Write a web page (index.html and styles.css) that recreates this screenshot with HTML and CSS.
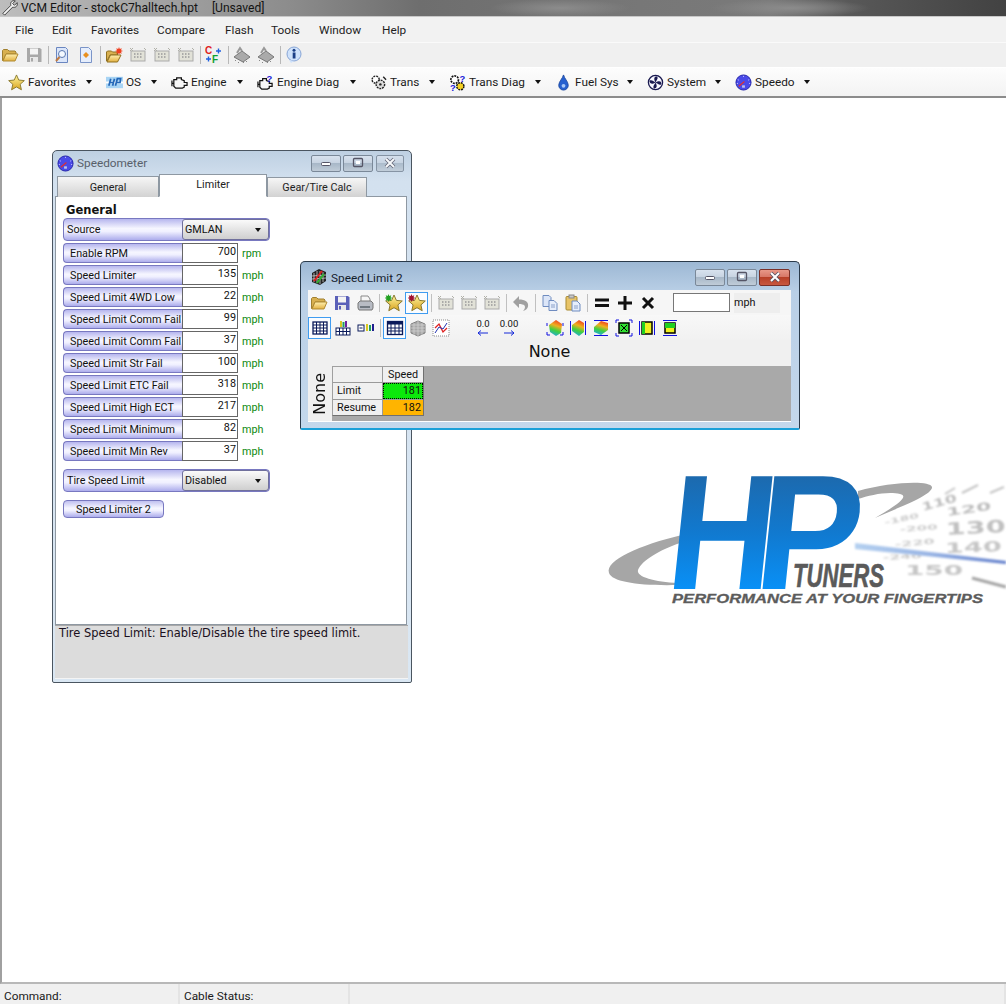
FILE: index.html
```html
<!DOCTYPE html>
<html lang="en">
<head>
<meta charset="utf-8">
<title>VCM Editor</title>
<link rel="stylesheet" href="styles.css">
</head>
<body>
<svg class="defs" width="0" height="0" aria-hidden="true">
  <defs>
    <linearGradient id="gFolder" x1="0" y1="0" x2="0" y2="1"><stop offset="0" stop-color="#fff0b0"/><stop offset="1" stop-color="#e2b040"/></linearGradient>
    <linearGradient id="gStar" x1="0" y1="0" x2="0" y2="1"><stop offset="0" stop-color="#fff6a0"/><stop offset="1" stop-color="#d9a420"/></linearGradient>
    <linearGradient id="gHeat" x1=".65" y1="0" x2=".35" y2="1"><stop offset="0" stop-color="#f04020"/><stop offset=".35" stop-color="#f0b020"/><stop offset=".65" stop-color="#40d040"/><stop offset="1" stop-color="#20a8e0"/></linearGradient>
    <linearGradient id="gHP" x1="0" y1="0" x2="0" y2="1"><stop offset=".12" stop-color="#1f66a6"/><stop offset=".5" stop-color="#1179cf"/><stop offset=".85" stop-color="#0893fb"/></linearGradient>
    <linearGradient id="gNeedle" x1="0" y1="0" x2="1" y2="0"><stop offset="0" stop-color="#b4d0f0"/><stop offset=".5" stop-color="#98b4e4"/><stop offset="1" stop-color="#5f7cca"/></linearGradient>
    <symbol id="i-folder" viewBox="0 0 18 18"><path d="M1.500 14.500V4.500l1-1h4l1.500 1.500h6l1 1v2H5L2 14.500z" fill="#d8b050" stroke="#a08030"/><path d="M2 15l3-7h12l-3 7z" fill="url(#gFolder)" stroke="#b08a30"/></symbol>
    <symbol id="i-newfolder" viewBox="0 0 18 18"><path d="M1.500 15V6l1-1h4l1 1h5v3H5l-3 6z" fill="#d8b050" stroke="#907020"/><path d="M2 16l3.500-7H16l-3.500 7z" fill="url(#gFolder)" stroke="#907020"/><path d="M14 1l.8 2 2-.8-.8 2 2 .8-2 .8.800 2-2-.8-.8 2-.8-2-2 .8.800-2-2-.8 2-.8-.8-2 2 .8z" fill="#f04020"/></symbol>
    <symbol id="i-save" viewBox="0 0 18 18"><path d="M2 2h13l1.500 1.500V16H2z" fill="currentColor"/><rect x="5" y="2.500" width="8" height="6" fill="#f4f4f4"/><rect x="5" y="11" width="8" height="5" fill="#e8e8e8"/><rect x="6" y="12" width="2" height="3.500" fill="currentColor"/></symbol>
    <symbol id="i-print" viewBox="0 0 18 18"><path d="M5 2h7l2 3v4H5z" fill="#f6f6f6" stroke="#888"/><path d="M2 9l2-2h11l2 2v5l-1 2H3l-1-2z" fill="#b8bcc4" stroke="#777"/><rect x="4" y="12" width="10" height="2" fill="#707880"/></symbol>
    <symbol id="i-docsearch" viewBox="0 0 18 18"><path d="M3.500 1.500h9l2 2v13h-11z" fill="#dbe6fa" stroke="#6a86c0"/><circle cx="9" cy="8" r="3.500" fill="#f4f9ff" stroke="#5a78b0"/><path d="M6.500 11L3 15" stroke="#c07a40" stroke-width="2"/></symbol>
    <symbol id="i-docorange" viewBox="0 0 18 18"><path d="M3.500 1.500h8l3 3v12h-11z" fill="#e6eefc" stroke="#7a94c8"/><path d="M9 6l3 3-3 3-3-3z" fill="#e89020"/></symbol>
    <symbol id="i-grid" viewBox="0 0 18 18"><rect x="2" y="5" width="14" height="10" fill="#e2e2d8" stroke="#aaa"/><path d="M5 8h1.500M8 8h1.500M11 8h1.500M5 11h1.500M8 11h1.500M11 11h1.500" stroke="#999" stroke-width="1.500"/><path d="M1 2l3 3M4 2L1 5M15 2l2 2" stroke="#b0b0a8"/></symbol>
    <symbol id="i-cf" viewBox="0 0 18 18"><text x="0" y="8" class="ic-c">C</text><text x="7" y="16.500" class="ic-f">F</text><path d="M1 13h5M3.500 10.500v5" stroke="#2060e0" stroke-width="1.400"/><path d="M11 5h5M13.500 2.500v5" stroke="#2060e0" stroke-width="1.400"/></symbol>
    <symbol id="i-chip" viewBox="0 0 18 18"><path d="M1 11l8-6 8 6-7 5z" fill="#aaa" stroke="#777"/><path d="M3 14l-1 1M6 16l-1 1M10 16l1 1M13 15l1 1" stroke="#888"/><path d="M4 7l3-5 2 3" fill="none" stroke="#999" stroke-width="2"/></symbol>
    <symbol id="i-info" viewBox="0 0 18 18"><circle cx="9" cy="8" r="7" fill="#cfe2fb" stroke="#87a5d6"/><path d="M4 14l2 3 3-2z" fill="#cfe2fb"/><rect x="7.700" y="6.500" width="2.800" height="6" fill="#1c3f86"/><circle cx="9" cy="4.200" r="1.500" fill="#1c3f86"/></symbol>
    <symbol id="i-star" viewBox="0 0 18 18"><path d="M9 1l2.400 5.400 5.900.6-4.400 3.900 1.300 5.800L9 13.700l-5.200 3 1.300-5.800L.7 7l5.900-.6z" fill="url(#gStar)" stroke="#8a7a30"/></symbol>
    <symbol id="i-star-g" viewBox="0 0 18 18"><use href="#i-star"/><path d="M3.500 0l.8 2 2-.8-.8 2 2 .8-2 .8.800 2-2-.8-.8 2-.8-2-2 .8.800-2-2-.8 2-.8-.8-2 2 .8z" fill="#20a020"/></symbol>
    <symbol id="i-star-r" viewBox="0 0 18 18"><use href="#i-star"/><path d="M3.500 0l.8 2 2-.8-.8 2 2 .8-2 .8.800 2-2-.8-.8 2-.8-2-2 .8.800-2-2-.8 2-.8-.8-2 2 .8z" fill="#a01030"/></symbol>
    <symbol id="i-hp" viewBox="0 0 18 18"><rect x="0" y="3" width="18" height="12" fill="#a8d4f4"/><rect x="0" y="8" width="18" height="2" fill="#fff"/><path d="M3 12.500L5 5M9 5L7 12.500M4 9h4M10 12.500L12 5h3.500l-.6 4H11" fill="none" stroke="#2468b8" stroke-width="1.800"/></symbol>
    <symbol id="i-engine" viewBox="0 0 18 18"><path d="M1 7v6M1 10h2M3 6h3V4h5v2l3 1v2h3v3h-3v2l-2 1H5l-2-2z" fill="none" stroke="#111" stroke-width="1.300"/></symbol>
    <symbol id="i-enginediag" viewBox="0 0 18 18"><path d="M1 8v6M1 11h2M3 7h3V5h4v2l3 1v2h3v3h-3v2l-2 1H5l-2-2z" fill="none" stroke="#111" stroke-width="1.300"/><text x="10" y="8" class="ic-q">?</text></symbol>
    <symbol id="i-trans" viewBox="0 0 18 18"><circle cx="6" cy="6" r="3.800" fill="#fff" stroke="#222" stroke-width="1.500" stroke-dasharray="2 1"/><circle cx="11" cy="11" r="4.500" fill="#ddd" stroke="#222" stroke-width="1.500" stroke-dasharray="2 1"/><circle cx="11" cy="11" r="1.300" fill="#222"/><path d="M14 3l3 3" stroke="#222" stroke-width="1.500"/></symbol>
    <symbol id="i-transdiag" viewBox="0 0 18 18"><circle cx="6" cy="6" r="4" fill="#fff" stroke="#111" stroke-width="1.800" stroke-dasharray="2 1"/><circle cx="12" cy="13" r="3.800" fill="#f4d020" stroke="#111" stroke-width="1.500" stroke-dasharray="2 1"/><text x="11" y="8.500" class="ic-q">?</text><text x="1" y="17.500" class="ic-q">?</text></symbol>
    <symbol id="i-fuel" viewBox="0 0 18 18"><path d="M9 1c1 4 5 7 5 11a5 5 0 0 1-10 0c0-4 4-7 5-11z" fill="#2560d0" stroke="#1c48a0"/><circle cx="9" cy="12.500" r="2" fill="#a8c8f8"/></symbol>
    <symbol id="i-system" viewBox="0 0 18 18"><circle cx="9" cy="9" r="7.500" fill="#f8f8ff" stroke="#1a1a50" stroke-width="1.400"/><path d="M9 9C6 4 9 2 11 3c1 2-1 4-2 6zM9 9c5-3 7 0 6 2-2 1-4-1-6-2zM9 9c3 5 0 7-2 6-1-2 1-4 2-6zM9 9C4 12 2 9 3 7c2-1 4 1 6 2z" fill="#1a1a50"/></symbol>
    <symbol id="i-speedo" viewBox="0 0 18 18"><circle cx="9" cy="9" r="8" fill="#4a4ae8" stroke="#2222a8"/><path d="M4 13l6-5" stroke="#e03030" stroke-width="1.300"/><rect x="7.500" y="12" width="3" height="2.500" fill="#c0c0e8"/><path d="M9 2v1M3 6l1 .5M15 6l-1 .5M2 10h1M15 10h1" stroke="#d8d8ff"/></symbol>
    <symbol id="i-table" viewBox="0 0 18 18"><rect x="2" y="3" width="14" height="12" fill="#fff" stroke="#0a1a5a" stroke-width="1.300"/><path d="M2 6h14M2 9h14M2 12h14M5.500 3v12M9 3v12M12.500 3v12" stroke="#0a1a5a"/></symbol>
    <symbol id="i-tablebars" viewBox="0 0 18 18"><rect x="2" y="9" width="14" height="7" fill="#fff" stroke="#0a1a5a"/><path d="M2 12.500h14M5.500 9v7M9 9v7M12.500 9v7" stroke="#0a1a5a"/><rect x="6" y="2" width="2" height="6" fill="#d8c820"/><rect x="8.500" y="3" width="2" height="5" fill="#20a060"/><rect x="11" y="2" width="2" height="6" fill="#7020a0"/></symbol>
    <symbol id="i-splitbars" viewBox="0 0 18 18"><rect x="1" y="6" width="6" height="6" fill="#fff" stroke="#0a1a5a"/><path d="M2.500 9h3" stroke="#0a1a5a"/><rect x="9" y="5" width="2" height="7" fill="#d8c820"/><rect x="12" y="6" width="2" height="6" fill="#20a060"/><rect x="15" y="5" width="2" height="7" fill="#202090"/></symbol>
    <symbol id="i-tablesel" viewBox="0 0 18 18"><rect x="1.500" y="2.500" width="15" height="13" fill="#fff" stroke="#0a1a5a" stroke-width="1.300"/><rect x="1.500" y="2.500" width="15" height="3" fill="#0a1a5a"/><path d="M1.500 9h15M1.500 12h15M5 5v10M9 5v10M13 5v10" stroke="#0a1a5a"/></symbol>
    <symbol id="i-mesh" viewBox="0 0 18 18"><path d="M2 5l7-3 7 3v9l-7 3-7-3z" fill="#a8a8a8" stroke="#808080"/><path d="M2 9l14 0M5 4v12M9 2v15M13 4v12M2 12l14 0M2 6l14 0" stroke="#d0d0d0" stroke-width=".8"/></symbol>
    <symbol id="i-graph" viewBox="0 0 18 18"><rect x="1" y="1" width="16" height="16" fill="#fff" stroke="#888" stroke-dasharray="1 1"/><path d="M3 9l4-4 4 8 4-4" fill="none" stroke="#e02020" stroke-width="1.300"/><path d="M3 14l4-6 4 2 4-6" fill="none" stroke="#2030b0"/></symbol>
    <symbol id="i-heat" viewBox="0 0 18 18"><path d="M3 6l7-5 6 4-1 9-5 3-6-4z" fill="url(#gHeat)"/><path d="M1 4v3M1 13v3h3M17 4v3M17 13v3h-3" fill="none" stroke="#1010e0"/></symbol>
    <symbol id="i-heatv" viewBox="0 0 18 18"><path d="M3 6l7-5 5 3v9l-5 4-7-5z" fill="url(#gHeat)"/><path d="M1.500 2v14M16.500 2v14" stroke="#1010e0"/></symbol>
    <symbol id="i-heath" viewBox="0 0 18 18"><path d="M2 8l7-6 7 2v7l-7 5-7-3z" fill="url(#gHeat)"/><path d="M2 1.500h14M2 16.500h14" stroke="#1010e0"/></symbol>
    <symbol id="i-boxx" viewBox="0 0 18 18"><rect x="4" y="4" width="10" height="10" fill="#30e030" stroke="#000" stroke-width="1.500"/><path d="M6 6l6 6M12 6l-6 6" stroke="#000"/><path d="M1 4V1h3M14 1h3v3M1 14v3h3M17 14v3h-3" fill="none" stroke="#1010e0"/></symbol>
    <symbol id="i-boxv" viewBox="0 0 18 18"><rect x="4" y="3" width="10" height="12" fill="#f0f020" stroke="#000" stroke-width="1.500"/><rect x="4" y="3" width="3" height="12" fill="#20d020"/><path d="M1.500 2v14M16.500 2v14" stroke="#1010e0"/></symbol>
    <symbol id="i-boxh" viewBox="0 0 18 18"><rect x="4" y="4" width="10" height="10" fill="#f0f020" stroke="#000" stroke-width="1.500"/><rect x="4" y="4" width="10" height="5" fill="#20d020"/><path d="M2 1.500h14M2 16.500h14" stroke="#1010e0"/></symbol>
    <symbol id="i-undo" viewBox="0 0 18 18"><path d="M1 8l6-6v3.500c6 0 10 2.500 9 7-.5 2-2 3.500-5 4.500 2-2 2.500-4 1.500-5.500-1-1-3-1.500-5.500-1.500v4z" fill="#a0a0a0"/></symbol>
    <symbol id="i-copy" viewBox="0 0 18 18"><path d="M2 1.500h6l2 2v9H2z" fill="#dce6f8" stroke="#6f8cc0"/><path d="M8 6.500h5l3 3v7H8z" fill="#e6eefc" stroke="#6f8cc0"/><path d="M10 11h4M10 13h4" stroke="#8aa0c8"/></symbol>
    <symbol id="i-paste" viewBox="0 0 18 18"><rect x="2" y="2.500" width="11" height="13.500" rx="1" fill="#e8c468" stroke="#a88a30"/><rect x="5" y="1" width="5" height="3" fill="#c8c8c8" stroke="#888"/><path d="M8 7h5l3 3v7H8z" fill="#e6eefc" stroke="#6f8cc0"/><path d="M10 12h4M10 14h4" stroke="#8aa0c8"/></symbol>
    <symbol id="i-eq" viewBox="0 0 18 18"><path d="M2 6h14M2 11.500h14" stroke="#111" stroke-width="3"/></symbol>
    <symbol id="i-plus" viewBox="0 0 18 18"><path d="M2 9h14M9 2v14" stroke="#111" stroke-width="3"/></symbol>
    <symbol id="i-times" viewBox="0 0 18 18"><path d="M4 4l10 10M14 4L4 14" stroke="#111" stroke-width="3"/></symbol>
    <symbol id="i-gauge" viewBox="0 0 18 18"><path d="M2 5l7-4 7 3v9l-6 4-8-3z" fill="#222"/><path d="M4 5v9M7 3v12M10 3v13M13 4v10M2 8l14-1M2 11l14-1" stroke="#cfcfcf" stroke-width=".8"/><path d="M4 13l8-10" stroke="#e02020" stroke-width="2"/><path d="M7 15l7-9" stroke="#30b030" stroke-width="2"/></symbol>
    <symbol id="i-wrench" viewBox="0 0 18 18"><path d="M1 15l9-9c-1-3 1-6 5-5l-3 3 2 2 3-3c1 4-2 6-5 5l-9 9z" fill="#f4f4f4" stroke="#333"/></symbol>
    <symbol id="i-min" viewBox="0 0 12 12"><rect x="1.500" y="5.500" width="9" height="3" rx="1" fill="#fff" stroke="#556"/></symbol>
    <symbol id="i-max" viewBox="0 0 12 12"><rect x="1.500" y="1.500" width="9" height="8" rx="1" fill="none" stroke="#556" stroke-width="1.300"/><rect x="4" y="4" width="4" height="3" fill="#fff"/></symbol>
    <symbol id="i-close" viewBox="0 0 12 12"><path d="M2 2l8 8M10 2l-8 8" stroke="#556" stroke-width="3.600"/><path d="M2 2l8 8M10 2l-8 8" stroke="#fff" stroke-width="2"/></symbol>
  </defs>
</svg>

<div class="app">
  <header class="titlebar">
    <svg class="ico"><use href="#i-wrench"/></svg>
    <span class="titlebar-text">VCM Editor - stockC7halltech.hpt</span>
    <span class="titlebar-state">[Unsaved]</span>
  </header>

  <nav class="menubar">
    <span>File</span><span>Edit</span><span>Favorites</span><span>Compare</span><span>Flash</span><span>Tools</span><span>Window</span><span>Help</span>
  </nav>

  <div class="iconbar">
    <svg class="ico"><use href="#i-folder"/></svg>
    <svg class="ico off"><use href="#i-save"/></svg>
    <i class="sep"></i>
    <svg class="ico"><use href="#i-docsearch"/></svg>
    <svg class="ico"><use href="#i-docorange"/></svg>
    <i class="sep"></i>
    <svg class="ico"><use href="#i-newfolder"/></svg>
    <svg class="ico"><use href="#i-grid"/></svg>
    <svg class="ico"><use href="#i-grid"/></svg>
    <svg class="ico"><use href="#i-grid"/></svg>
    <i class="sep"></i>
    <svg class="ico"><use href="#i-cf"/></svg>
    <i class="sep"></i>
    <svg class="ico"><use href="#i-chip"/></svg>
    <svg class="ico"><use href="#i-chip"/></svg>
    <i class="sep"></i>
    <svg class="ico"><use href="#i-info"/></svg>
  </div>

  <div class="navbar">
    <div class="navitem"><svg class="ico"><use href="#i-star"/></svg><span>Favorites</span><b class="caret"></b></div>
    <div class="navitem"><svg class="ico"><use href="#i-hp"/></svg><span>OS</span><b class="caret"></b></div>
    <div class="navitem"><svg class="ico"><use href="#i-engine"/></svg><span>Engine</span><b class="caret"></b></div>
    <div class="navitem"><svg class="ico"><use href="#i-enginediag"/></svg><span>Engine Diag</span><b class="caret"></b></div>
    <div class="navitem"><svg class="ico"><use href="#i-trans"/></svg><span>Trans</span><b class="caret"></b></div>
    <div class="navitem"><svg class="ico"><use href="#i-transdiag"/></svg><span>Trans Diag</span><b class="caret"></b></div>
    <div class="navitem"><svg class="ico"><use href="#i-fuel"/></svg><span>Fuel Sys</span><b class="caret"></b></div>
    <div class="navitem"><svg class="ico"><use href="#i-system"/></svg><span>System</span><b class="caret"></b></div>
    <div class="navitem"><svg class="ico"><use href="#i-speedo"/></svg><span>Speedo</span><b class="caret"></b></div>
  </div>

  <main class="desktop">
    <section class="win win-speedo">
      <div class="win-title">
        <svg class="ico"><use href="#i-speedo"/></svg>
        <span class="win-name">Speedometer</span>
        <div class="win-btns">
          <span class="wbtn"><svg><use href="#i-min"/></svg></span>
          <span class="wbtn"><svg><use href="#i-max"/></svg></span>
          <span class="wbtn wbtn-x"><svg><use href="#i-close"/></svg></span>
        </div>
      </div>
      <div class="tabs">
        <span class="tab tab-general">General</span>
        <span class="tab tab-active">Limiter</span>
        <span class="tab tab-gear">Gear/Tire Calc</span>
      </div>
      <div class="pane">
        <h2 class="pane-head">General</h2>
        <div class="combo"><span class="combo-label">Source</span><span class="combo-box">GMLAN<b class="caret"></b></span></div>
        <div class="rows">
          <div class="row"><span class="row-label">Enable RPM</span><span class="row-val">700</span><span class="row-unit">rpm</span></div>
          <div class="row"><span class="row-label">Speed Limiter</span><span class="row-val">135</span><span class="row-unit">mph</span></div>
          <div class="row"><span class="row-label">Speed Limit 4WD Low</span><span class="row-val">22</span><span class="row-unit">mph</span></div>
          <div class="row"><span class="row-label">Speed Limit Comm Fail</span><span class="row-val">99</span><span class="row-unit">mph</span></div>
          <div class="row"><span class="row-label">Speed Limit Comm Fail R</span><span class="row-val">37</span><span class="row-unit">mph</span></div>
          <div class="row"><span class="row-label">Speed Limit Str Fail</span><span class="row-val">100</span><span class="row-unit">mph</span></div>
          <div class="row"><span class="row-label">Speed Limit ETC Fail</span><span class="row-val">318</span><span class="row-unit">mph</span></div>
          <div class="row"><span class="row-label">Speed Limit High ECT</span><span class="row-val">217</span><span class="row-unit">mph</span></div>
          <div class="row"><span class="row-label">Speed Limit Minimum</span><span class="row-val">82</span><span class="row-unit">mph</span></div>
          <div class="row"><span class="row-label">Speed Limit Min Rev</span><span class="row-val">37</span><span class="row-unit">mph</span></div>
        </div>
        <div class="combo combo-tire"><span class="combo-label">Tire Speed Limit</span><span class="combo-box">Disabled<b class="caret"></b></span></div>
        <div class="pane-btn">Speed Limiter 2</div>
      </div>
      <div class="helpbox">Tire Speed Limit: Enable/Disable the tire speed limit.</div>
    </section>

    <section class="win win-limit">
      <div class="win-title">
        <svg class="ico"><use href="#i-gauge"/></svg>
        <span class="win-name">Speed Limit 2</span>
        <div class="win-btns">
          <span class="wbtn"><svg><use href="#i-min"/></svg></span>
          <span class="wbtn"><svg><use href="#i-max"/></svg></span>
          <span class="wbtn wbtn-close"><svg><use href="#i-close"/></svg></span>
        </div>
      </div>
      <div class="tbar tbar-one">
        <svg class="ico"><use href="#i-folder"/></svg>
        <svg class="ico blue"><use href="#i-save"/></svg>
        <svg class="ico"><use href="#i-print"/></svg>
        <i class="sep"></i>
        <svg class="ico"><use href="#i-star-g"/></svg>
        <span class="hot"><svg class="ico"><use href="#i-star-r"/></svg></span>
        <i class="sep"></i>
        <svg class="ico"><use href="#i-grid"/></svg>
        <svg class="ico"><use href="#i-grid"/></svg>
        <svg class="ico"><use href="#i-grid"/></svg>
        <i class="sep"></i>
        <svg class="ico"><use href="#i-undo"/></svg>
        <i class="sep"></i>
        <svg class="ico"><use href="#i-copy"/></svg>
        <svg class="ico"><use href="#i-paste"/></svg>
        <i class="sep"></i>
        <svg class="ico"><use href="#i-eq"/></svg>
        <svg class="ico"><use href="#i-plus"/></svg>
        <svg class="ico"><use href="#i-times"/></svg>
        <span class="tb-input"></span>
        <span class="tb-unit">mph</span>
      </div>
      <div class="tbar tbar-two">
        <span class="hot"><svg class="ico"><use href="#i-table"/></svg></span>
        <svg class="ico"><use href="#i-tablebars"/></svg>
        <svg class="ico"><use href="#i-splitbars"/></svg>
        <i class="sep"></i>
        <span class="hot"><svg class="ico"><use href="#i-tablesel"/></svg></span>
        <svg class="ico"><use href="#i-mesh"/></svg>
        <svg class="ico"><use href="#i-graph"/></svg>
        <span class="dec dec-a"><span>0.0</span><svg class="dec-arrow" viewBox="0 0 12 6"><path d="M1 3h10M4 .5L1 3l3 2.500" fill="none" stroke="#1428d8"/></svg></span>
        <span class="dec dec-b"><span>0.00</span><svg class="dec-arrow" viewBox="0 0 12 6"><path d="M1 3h10M8 .5L11 3 8 5.500" fill="none" stroke="#1428d8"/></svg></span>
        <div class="tb-heat">
          <svg class="ico"><use href="#i-heat"/></svg>
          <svg class="ico"><use href="#i-heatv"/></svg>
          <svg class="ico"><use href="#i-heath"/></svg>
          <svg class="ico"><use href="#i-boxx"/></svg>
          <svg class="ico"><use href="#i-boxv"/></svg>
          <svg class="ico"><use href="#i-boxh"/></svg>
        </div>
      </div>
      <div class="axis-x">None</div>
      <div class="gridwrap">
        <div class="axis-y"><span>None</span></div>
        <div class="gridarea">
          <div class="cells">
            <span class="cell"></span><span class="cell cell-head">Speed</span>
            <span class="cell">Limit</span><span class="cell cell-limit">181</span>
            <span class="cell">Resume</span><span class="cell cell-resume">182</span>
          </div>
        </div>
      </div>
    </section>

    <svg class="logo" viewBox="0 0 406 150" role="img" aria-label="HP Tuners logo">
      <g class="logo-soft">
        <path d="M345 29l10-6M362 28l16-8M390 28l14-6" stroke="#c4c4c4" stroke-width="2"/>
        <text transform="translate(323 46) rotate(-16)" class="n n-m" textLength="36" lengthAdjust="spacingAndGlyphs">110</text>
        <text transform="translate(347 51) rotate(-8)" class="n n-m" textLength="45" lengthAdjust="spacingAndGlyphs">120</text>
        <text transform="translate(346 70) rotate(-3)" class="n n-l" textLength="60" lengthAdjust="spacingAndGlyphs">130</text>
        <text transform="translate(345 88) rotate(-2)" class="n n-l2" textLength="57" lengthAdjust="spacingAndGlyphs">140</text>
        <text transform="translate(305 110)" class="n n-l2" textLength="58" lengthAdjust="spacingAndGlyphs">150</text>
        <text transform="translate(285 60) rotate(-12)" class="n n-s" textLength="35" lengthAdjust="spacingAndGlyphs">-180</text>
        <text transform="translate(300 67) rotate(-4)" class="n n-s" textLength="38" lengthAdjust="spacingAndGlyphs">-200</text>
        <text transform="translate(295 82) rotate(-5)" class="n n-s" textLength="40" lengthAdjust="spacingAndGlyphs">-220</text>
        <text transform="translate(283 95) rotate(-3)" class="n n-s" textLength="39" lengthAdjust="spacingAndGlyphs">-240</text>
        <path d="M372 113l34 9" stroke="#a4a4a4" stroke-width="3"/>
      </g>
      <path class="logo-needle" d="M255 78l151 18v3L255 84z"/>
      <path d="M258 26C290 17 330 15 332 22 333 30 300 42 275 53 296 41 310 31 300 29 288 26 270 30 258 34z" fill="#a6a6a6"/>
      <path d="M82 70C40 80 5 95 9 108c3 9 31 13 69 12v-2C55 117 36 112 38 105c4-10 22-20 42-27z" fill="#a6a6a6"/>
      <text class="logo-hp" transform="translate(64 124) skewX(-6) scale(.9 1)">H</text>
      <text class="logo-hp" transform="translate(152 124) skewX(-6) scale(.96 1)">P</text>
      <text class="logo-tuners" x="193" y="122" textLength="91" lengthAdjust="spacingAndGlyphs">TUNERS</text>
      <text class="logo-tag" x="72" y="138" textLength="311" lengthAdjust="spacingAndGlyphs">PERFORMANCE AT YOUR FINGERTIPS</text>
    </svg>
  </main>

  <footer class="statusbar">
    <span class="st st-cmd">Command:</span>
    <span class="st st-cable">Cable Status:</span>
    <span class="st"></span>
  </footer>
</div>
</body>
</html>
```

FILE: styles.css
```css
* { box-sizing: border-box; }
html, body { margin: 0; padding: 0; }
body { width: 1006px; height: 1004px; overflow: hidden; background: #fff; color: #111; font-family: Roboto, "Liberation Sans", sans-serif; font-size: 10.800px; }
.defs { position: absolute; }
.ico { width: 18px; height: 18px; flex: none; display: block; overflow: visible; }
.ic-c, .ic-f { font: bold 10px "Liberation Sans", sans-serif; }
.ic-c { fill: #e02020; }
.ic-f { fill: #10a030; }
.ic-q { font: bold 10px "Liberation Sans", sans-serif; fill: #1818d8; }

.app { display: flex; flex-direction: column; height: 1004px; }

.titlebar {
  height: 17px; flex: none; display: flex; align-items: center; padding-left: 2px;
  border-bottom: 1px solid #c8c8c8;
  font: 12.100px/16px Roboto, sans-serif; color: #141414;
  background:
    radial-gradient(ellipse 70px 9px at 560px 8px, #8c8c8c, transparent),
    radial-gradient(ellipse 80px 9px at 790px 8px, #8c8c8c, transparent),
    linear-gradient(90deg, #bdbdbd 0, #a4a4a4 150px, #8c8c8c 290px, #6e6e6e 420px, #777 640px, #7a7a7a 770px, #585858 850px, #424242 1006px);
}
.titlebar .ico { width: 16px; height: 16px; }
.titlebar-text { margin-left: 3px; }
.titlebar-state { margin-left: 14px; }

.menubar {
  height: 25px; flex: none; padding-left: 15px; background: #f2f2f2;
  display: grid; grid-template-columns: 37px 39px 66px 68px 46px 48px 63px auto; justify-content: start; align-items: center;
  font: 11.800px Roboto, sans-serif; color: #1e1e1e;
}

.iconbar {
  height: 25px; flex: none; display: flex; align-items: center;
  background: #f0f0f0; border-top: 1px solid #fafafa;
}
.iconbar .ico { width: 18px; margin: 0 3px; }
.iconbar .ico:first-child { margin-left: 1px; }
.iconbar .sep { width: 1px; height: 18px; margin: 0 1.500px; background: #b8b8b8; flex: none; }
.iconbar .ico.off { color: #a8a8a8; }

.navbar {
  height: 31px; flex: none; padding: 0 0 0 8px; border-top: 1px solid #fff;
  background: linear-gradient(#fdfdfd, #f3f3f3);
  border-bottom: 2px solid #8c8c8c;
  display: grid; grid-template-columns: 98px 65px 86px 113px 79px 106px 92px 88px 89px; justify-content: start;
  font: 11.800px Roboto, sans-serif; color: #1a1a1a;
}
.navitem { display: flex; align-items: center; gap: 2px; padding-right: 14px; }
.navitem .ico { width: 17px; height: 17px; margin-right: 1px; }
.navitem span { white-space: nowrap; }
.caret { width: 0; height: 0; border: 3.500px solid transparent; border-top: 4px solid #111; border-bottom: 0; display: block; }
.navitem .caret { margin-left: auto; }

.desktop { flex: 1; position: relative; background: #fff; border-left: 2px solid #a0a0a0; border-bottom: 2px solid #b8b8b8; }

.statusbar { height: 20px; flex: none; display: grid; grid-template-columns: 180px 170px 1fr; background: #f0f0f0; font: 11.800px Roboto, sans-serif; color: #1a1a1a; }
.st { padding: 2px 0 0 4px; line-height: 20px; border-right: 2px solid #e4e4e4; }

.win { position: absolute; display: flex; flex-direction: column; border: 1px solid #4a5560; border-radius: 5px 5px 2px 2px; }
.win-title { display: flex; align-items: center; flex: none; font: 11.800px Roboto, sans-serif; }
.win-btns { margin-left: auto; display: flex; gap: 2px; }
.wbtn { display: flex; align-items: center; justify-content: center; height: 17px; width: 30px; border: 1px solid #7a8898; border-radius: 2px; background: linear-gradient(#d8e2ee 0, #c8d4e2 45%, #a8b8c8 50%, #c0ccd8 100%); }
.wbtn svg { width: 12px; height: 12px; display: block; }
.wbtn-x { opacity: .85; }
.wbtn-close { border-color: #7a3028; background: linear-gradient(#e89888 0, #d87868 45%, #b84028 50%, #c85840 100%); width: 31px; }

.win-speedo { left: 50px; top: 52px; width: 360px; height: 533px; padding: 0 3px 3px 2px; background: linear-gradient(#bed0e2, #d3e1ef 30px, #dae7f3); }
.win-speedo .win-title { height: 24px; padding: 0 4px 0 2px; color: #58606a; }
.win-speedo .win-title .ico { width: 17px; height: 17px; }
.win-speedo .win-name { margin-left: 3px; }
.win-speedo .wbtn:nth-child(3) { width: 28px; margin-left: 1px; }

.tabs { display: flex; height: 22px; flex: none; align-items: flex-end; padding-left: 2px; margin-bottom: -1px; position: relative; z-index: 1; }
.tab { height: 21px; border: 1px solid #8e98a2; border-bottom: 0; background: linear-gradient(#f6f6f6, #d2d2d2); display: flex; align-items: center; justify-content: center; color: #222; }
.tab-general { width: 102px; }
.tab-gear { width: 100px; height: 20px; }
.tab-active { width: 108px; height: 23px; background: #fff; border-bottom: 1px solid #fff; padding-bottom: 3px; }

.pane { height: 429px; flex: none; background: #fff; border: 1px solid #8e98a2; padding: 7px 0 0 7px; margin-right: 1px; }
.pane-head { margin: 0 0 1px 3px; font: bold 11.500px/13px "DejaVu Sans", sans-serif; color: #111; }
.combo { display: flex; width: 207px; height: 23px; border: 1px solid #7878c0; border-radius: 4px; background: linear-gradient(#b6b6ee, #f6f6ff 45%, #f0f0ff 60%, #acacec); align-items: stretch; }
.combo-label { width: 118px; padding-left: 3px; line-height: 21px; }
.combo-box { flex: 1; display: flex; align-items: center; padding: 0 7px 0 2px; justify-content: space-between; border: 1px solid #70709c; border-radius: 3px; background: linear-gradient(#fafafa, #cfcfcf); }
.rows { display: flex; flex-direction: column; gap: 2px; margin-top: 2px; }
.row { display: flex; height: 20px; align-items: stretch; }
.row-label { width: 119px; border: 1px solid #7878c0; border-right: 0; border-radius: 4px 0 0 4px; background: linear-gradient(#b6b6ee, #f6f6ff 45%, #f0f0ff 60%, #acacec); padding-left: 6px; line-height: 19px; white-space: nowrap; overflow: hidden; }
.row-val { width: 56px; border: 1px solid #666; background: #fff; text-align: right; padding-right: 1px; line-height: 15px; }
.row-unit { margin-left: 4px; color: #0c8a10; line-height: 21px; }
.combo-tire { margin-top: 8px; }
.pane-btn { width: 101px; height: 18px; margin-top: 8px; border: 1px solid #7878c0; border-radius: 4px; background: linear-gradient(#c0c0f0, #f6f6ff 45%, #f0f0ff 60%, #acacec); text-align: center; line-height: 17px; }

.helpbox { flex: 1; background: #dcdcdc; border-top: 1px solid #a8a8a8; border-bottom: 1px solid #f4f4f4; padding: 0 0 0 4px; font: 11.450px/14px "DejaVu Sans", sans-serif; color: #1a1020; }

.win-limit { left: 298px; top: 163px; width: 500px; height: 169px; padding: 0 8px 6px 7px; z-index: 2; border-color: #2a3a4a; border-bottom: 2px solid #1ba0d8; background: linear-gradient(#9db8d4, #b9cfe6 30px, #c4d8ec); }
.win-limit .win-title { height: 28px; padding: 2px 1px 0 2px; color: #14202c; }
.win-limit .win-name { margin-left: 3px; padding-top: 2px; }

.tbar { height: 25px; flex: none; display: flex; align-items: center; }
.tbar .ico { width: 18px; height: 18px; margin: 0 2.500px; }
.tbar .sep { width: 1px; height: 18px; background: #c0c0c0; margin: 0 2.500px; flex: none; }
.tbar-one { background: #f6f6f6; }
.tbar-one > .ico:first-child { margin-left: 1.500px; }
.tbar-two { background: linear-gradient(#f8f8f8, #f1f1f1); }
.win-limit .blue { color: #5a60b8; }
.hot { display: block; flex: none; border: 1px solid #3f9cf0; background: #fafcff; padding: 1px 0; width: 23px; height: 22px; }
.hot .ico { margin: 0 1.500px; }
.tb-input { width: 57px; height: 19px; margin-left: 14px; border: 1px solid #777; background: #fff; flex: none; }
.tb-unit { margin-left: 4px; width: 46px; height: 20px; line-height: 20px; background: #eeeeee; }
.dec { display: flex; flex-direction: column; align-items: center; font-size: 9.500px; line-height: 10px; color: #111; flex: none; }
.dec-arrow { width: 12px; height: 6px; display: block; margin-top: 1px; }
.dec-a { margin-left: 21px; width: 20px; }
.dec-b { margin-left: 3px; width: 26px; }
.tb-heat { display: flex; margin-left: 21px; }
.tb-heat .ico { margin: 0 2.500px; }

.axis-x { height: 26px; flex: none; background: #f0f0f0; text-align: center; font: 16px/24px "DejaVu Sans", sans-serif; color: #111; }
.gridwrap { flex: 1; display: flex; border-bottom: 1px solid #fff; min-height: 0; }
.axis-y { width: 24px; background: #f0f0f0; display: flex; align-items: center; justify-content: center; flex: none; }
.axis-y span { writing-mode: vertical-rl; transform: rotate(180deg); font: 16px/18px "DejaVu Sans", sans-serif; }
.gridarea { flex: 1; background: #a9a9a9; }
.cells { display: inline-grid; grid-template-columns: 49px 40px; grid-template-rows: 15px 16px 15px; gap: 1px; background: #9a9a9a; border: 1px solid #a0a0a0; border-right-color: #707070; border-bottom-color: #707070; }
.cell { background: #f0f0f0; padding-left: 4px; line-height: 16px; color: #111; }
.cell-head { text-align: center; padding: 0; }
.cell-limit { background: #0be80b; text-align: right; padding-right: 2px; outline: 1px dotted #000; outline-offset: -1px; }
.cell-resume { background: #ffb400; text-align: right; padding-right: 2px; }

.logo { position: absolute; left: 598px; top: 367px; width: 406px; height: 150px; overflow: hidden; }
.logo-soft { filter: blur(.9px); }
.n { font-family: "DejaVu Sans", sans-serif; font-weight: bold; fill: #bdbdbd; }
.n-s { font-size: 7px; fill: #cccccc; }
.n-m { font-size: 11px; }
.n-l { font-size: 17px; fill: #c0c0c0; }
.n-l2 { font-size: 14px; fill: #c6c6c6; }
.logo-needle { fill: url(#gNeedle); filter: blur(1px); }
.logo-hp { font: bold 164px "Liberation Sans", sans-serif; fill: url(#gHP); }
.logo-tuners { font: italic bold 33px "Liberation Sans", sans-serif; fill: #5a5a5a; stroke: #5a5a5a; stroke-width: .6px; }
.logo-tag { font: italic bold 13px "Liberation Sans", sans-serif; fill: #5c5c5c; stroke: #5c5c5c; stroke-width: .3px; }
```
